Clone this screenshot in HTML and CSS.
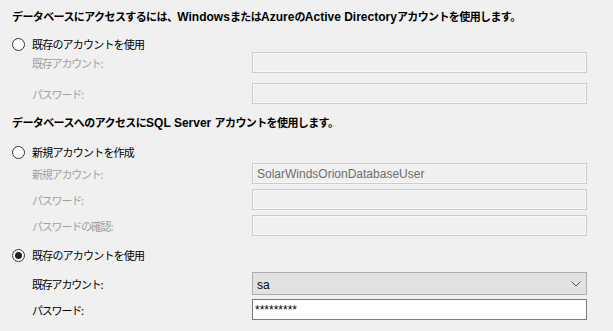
FILE: index.html
```html
<!DOCTYPE html>
<html lang="ja">
<head>
  <meta charset="UTF-8">
  <title>データベース アカウント</title>
  <link rel="stylesheet" href="styles.css">
</head>
<body>
  <div class="panel">
    <div class="heading heading-first">データベースにアクセスするには、<span class="latin">Windows</span>または<span class="latin">Azure</span>の<span class="latin">Active Directory</span>アカウントを使用します。</div>

    <label class="option option-first">
      <span class="radio"></span>
      <span class="option-text">既存のアカウントを使用</span>
    </label>
    <div class="field field-flush">
      <span class="field-label disabled">既存アカウント:</span>
      <span class="box box-disabled"></span>
    </div>
    <div class="field field-wide">
      <span class="field-label disabled">パスワード:</span>
      <span class="box box-disabled"></span>
    </div>

    <div class="heading heading-second">データベースへのアクセスに<span class="latin">SQL Server </span>アカウントを使用します。</div>

    <label class="option option-second">
      <span class="radio"></span>
      <span class="option-text">新規アカウントを作成</span>
    </label>
    <div class="field field-tight">
      <span class="field-label disabled">新規アカウント:</span>
      <span class="box box-disabled">SolarWindsOrionDatabaseUser</span>
    </div>
    <div class="field">
      <span class="field-label disabled">パスワード:</span>
      <span class="box box-disabled"></span>
    </div>
    <div class="field">
      <span class="field-label disabled">パスワードの確認:</span>
      <span class="box box-disabled"></span>
    </div>

    <label class="option option-third">
      <span class="radio checked"></span>
      <span class="option-text">既存のアカウントを使用</span>
    </label>
    <div class="field field-combo">
      <span class="field-label">既存アカウント:</span>
      <span class="box combo">sa
        <svg class="chevron" width="10" height="6" viewBox="0 0 10 6"><path d="M0.5 0.5 L5 5 L9.5 0.5" fill="none" stroke="#555" stroke-width="1"/></svg>
      </span>
    </div>
    <div class="field field-pass">
      <span class="field-label">パスワード:</span>
      <span class="box box-active">*********</span>
    </div>
  </div>
</body>
</html>
```

FILE: styles.css
```css
body {
  margin: 0;
  background-color: #f0f0f0;
  color: #000;
  font-family: "Noto Sans CJK JP", "Noto Sans", sans-serif;
  font-size: 11px;
}
.panel {
  padding-left: 12px;
  width: 575px;
}
.heading {
  height: 16px;
  line-height: 16px;
  font-weight: bold;
  letter-spacing: -0.6px;
  white-space: nowrap;
}
.heading .latin {
  font-family: "Liberation Sans", Arial, sans-serif;
  font-size: 12px;
  letter-spacing: 0;
}
.heading-first {
  margin-top: 8px;
}
.heading-second {
  margin-top: 10px;
}
.option {
  display: flex;
  align-items: center;
  gap: 7px;
  height: 16px;
}
.option-text {
  letter-spacing: -0.8px;
}
.option-first {
  margin-top: 12px;
}
.option-second {
  margin-top: 14px;
}
.option-third {
  margin-top: 11px;
}
.radio {
  width: 11px;
  height: 11px;
  border: 1px solid #333;
  border-radius: 50%;
  background-color: #fff;
  display: flex;
  align-items: center;
  justify-content: center;
}
.radio.checked::after {
  content: "";
  width: 7px;
  height: 7px;
  border-radius: 50%;
  background-color: #222;
}
.field {
  display: flex;
  align-items: center;
  height: 21px;
  margin-top: 5px;
}
.field-flush {
  margin-top: 0;
}
.field-tight {
  margin-top: 3px;
}
.field-wide {
  margin-top: 10px;
}
.field-combo {
  height: 23px;
  margin-top: 9px;
}
.field-pass {
  margin-top: 4px;
}
.field-label {
  width: 220px;
  padding-left: 20px;
  letter-spacing: -1.2px;
  white-space: nowrap;
}
.disabled {
  color: #a0a0a0;
}
.box {
  box-sizing: border-box;
  width: 335px;
  height: 100%;
  display: flex;
  align-items: center;
  padding-left: 4px;
  font-family: "Liberation Sans", Arial, sans-serif;
  font-size: 12px;
}
.box-disabled {
  border: 1px solid #cccccc;
  box-shadow: inset 0 0 0 1px #f8f8f8;
  color: #6d6d6d;
}
.combo {
  position: relative;
  background-color: #e1e1e1;
  border: 1px solid #adadad;
  padding-top: 2px;
}
.chevron {
  position: absolute;
  right: 5px;
  top: 8px;
}
.box-active {
  background-color: #fff;
  border: 1px solid #7a7a7a;
  padding-left: 2px;
}
```
